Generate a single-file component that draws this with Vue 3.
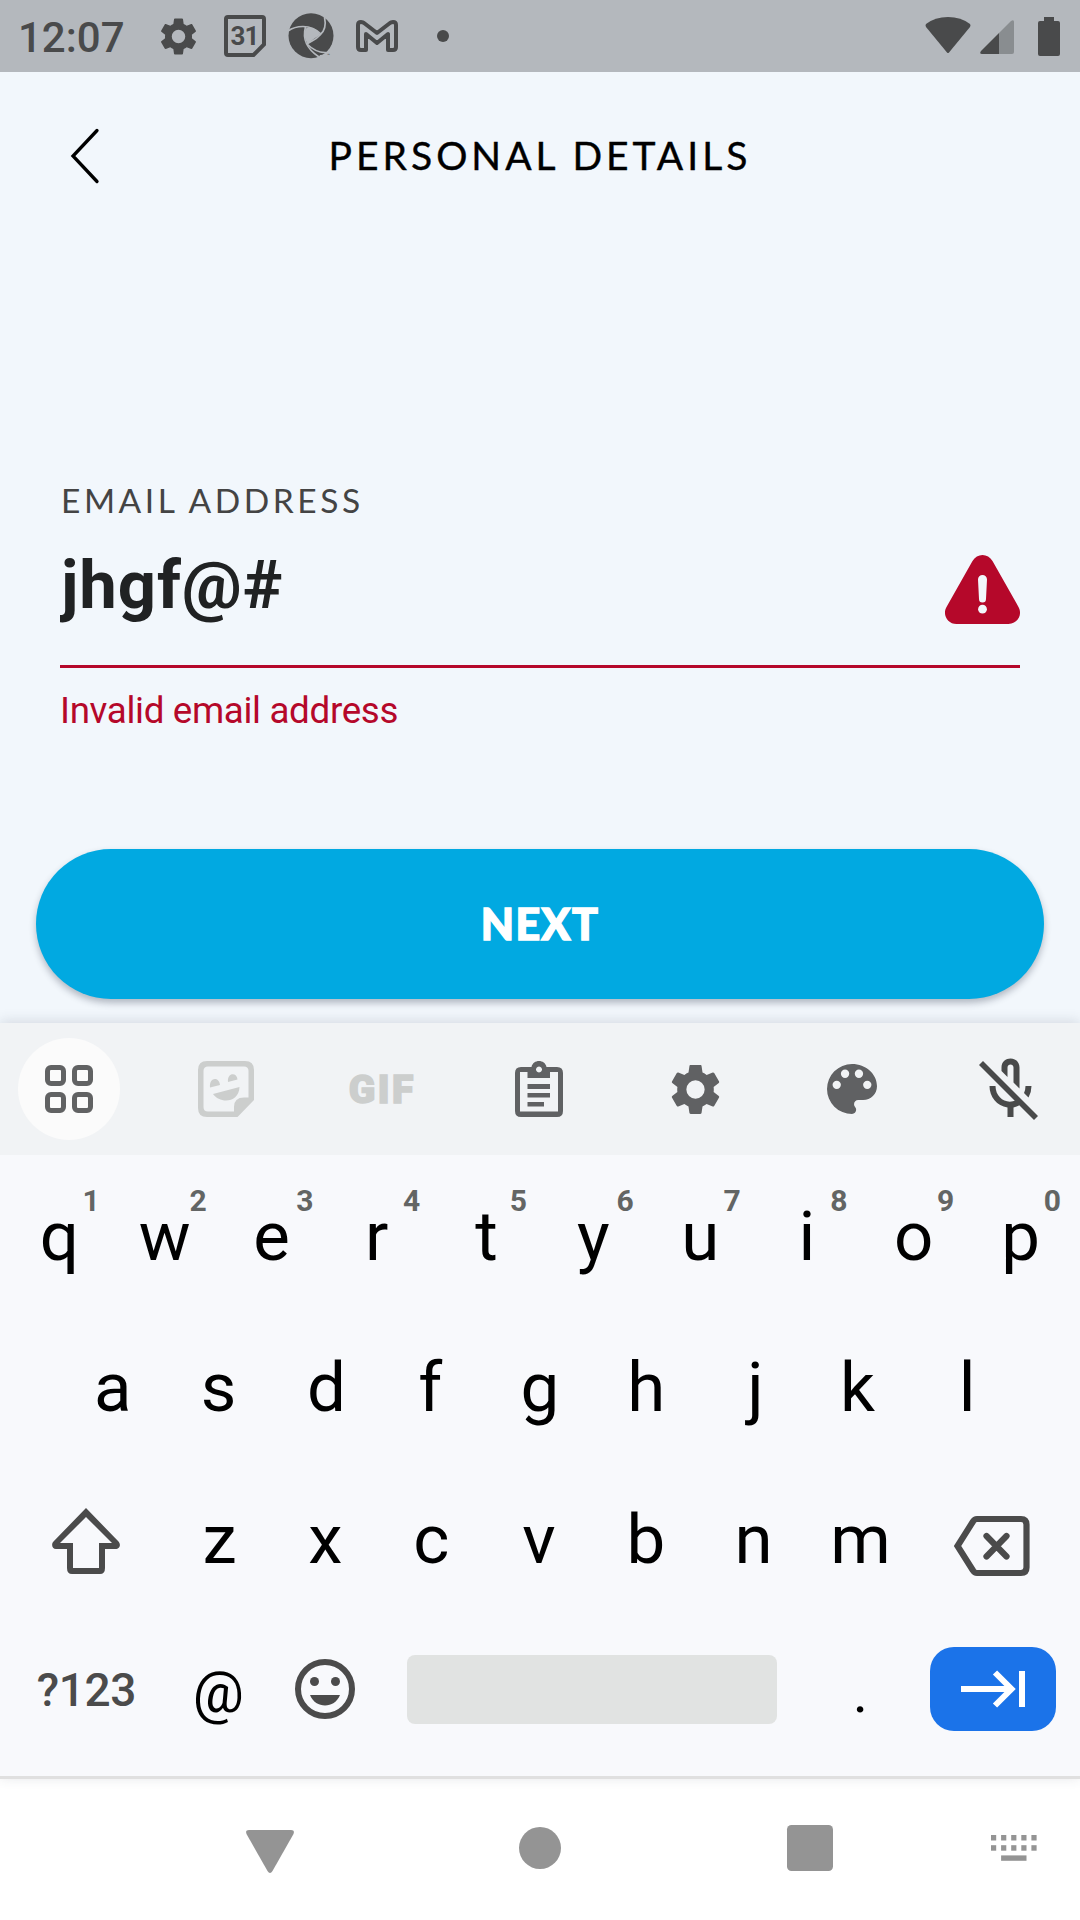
<script setup>
import { ref } from 'vue'

const email = ref('jhgf@#')
const topRow = 'qwertyuiop'.split('').map((key, i) => ({ key, hint: (i + 1) % 10 }))
const homeRow = 'asdfghjkl'.split('')
const bottomRow = 'zxcvbnm'.split('')

// Optical centring of glyphs whose ink is not centred in the advance width
const optical = { w: -1.5, e: -1.5, r: -3, s: -1, f: -3, h: -0.5, j: 2, k: -3, x: -1, c: -2, v: -1, b: -1 }
const nudge = (k) => {
  const v = optical[k] || 0
  return v < 0 ? { paddingRight: `${-2 * v}px` } : { paddingLeft: `${2 * v}px` }
}

const gear =
  'M19.14 12.94c.04-.3.06-.61.06-.94 0-.32-.02-.64-.07-.94l2.03-1.58c.18-.14.23-.41.12-.61l-1.92-3.32c-.12-.22-.37-.29-.59-.22l-2.39.96c-.5-.38-1.03-.7-1.62-.94l-.36-2.54c-.04-.24-.24-.41-.48-.41h-3.84c-.24 0-.43.17-.47.41l-.36 2.54c-.59.24-1.13.57-1.62.94l-2.39-.96c-.22-.08-.47 0-.59.22L2.74 8.87c-.12.21-.08.47.12.61l2.03 1.58c-.05.3-.09.63-.09.94s.02.64.07.94l-2.03 1.58c-.18.14-.23.41-.12.61l1.92 3.32c.12.22.37.29.59.22l2.39-.96c.5.38 1.03.7 1.62.94l.36 2.54c.05.24.24.41.48.41h3.84c.24 0 .44-.17.47-.41l.36-2.54c.59-.24 1.13-.56 1.62-.94l2.39.96c.22.08.47 0 .59-.22l1.92-3.32c.12-.22.07-.47-.12-.61zM12 15.6A3.6 3.6 0 1 1 12 8.4a3.6 3.6 0 0 1 0 7.2z'
</script>

<template>
  <div class="screen">
    <header class="status">
      <span class="clock">12:07</span>
      <svg class="st-gear" width="45" height="45" viewBox="0 0 24 24"><path :d="gear" /></svg>
      <svg class="st-cal" width="42" height="42" viewBox="0 0 42 42">
        <path d="M4 2H38Q40 2 40 4V29.500L29.500 40H4Q2 40 2 38V4Q2 2 4 2Z" fill="none" stroke="#494a4b" stroke-width="4" />
        <text x="20.500" y="29.500" text-anchor="middle">31</text>
      </svg>
      <svg class="st-swirl" width="46" height="46" viewBox="0 0 46 46">
        <circle cx="23" cy="22.700" r="22.500" />
        <g class="cut" fill="none" stroke-width="1.700">
          <path d="M0 18C7 13 22 10 33 21" />
          <path d="M36.500 4C38 11 38 17 32 22C28 27 23 28 19 31" />
          <path d="M17.500 14C14 27 19 36 31 44" />
          <path d="M19 31C26 38 33 41 42 39" />
        </g>
        <path class="cutfill" d="M17.500 15.500Q26 12 32.500 21.500Q25 26 19.500 31Q15 24 17.500 15.500ZM29.500 46L32 42Q37 42 41 37L46 38V46Z" />
        <text x="39" y="44">™</text>
      </svg>
      <svg class="st-mail" width="42" height="32" viewBox="0 0 42 32">
        <path d="M2 5V27Q2 30 5 30H10V14L21 23L32 14V30H37Q40 30 40 27V5Q40 2 37 2Q35 2 34 3L21 13L8 3Q7 2 5 2Q2 2 2 5Z" fill="none" stroke="#494a4b" stroke-width="4" stroke-linejoin="round" />
      </svg>
      <i class="dot"></i>
      <svg class="st-wifi" width="46" height="37" viewBox="0 0 46 37">
        <path d="M1 7Q10 0 23 0Q36 0 45 7Q46 8 45 10L24 35.500Q23 36.500 22 35.500L1 10Q0 8 1 7Z" />
      </svg>
      <svg class="st-signal" width="34" height="34" viewBox="0 0 34 34">
        <path d="M19 13L31 1Q34 -1 34 2V32Q34 34 32 34H19Z" fill="#898d90" />
        <path d="M19 13V34H2Q-1 34 1 31Z" />
      </svg>
      <svg class="st-battery" width="22" height="39" viewBox="0 0 22 39">
        <path d="M6 0H16V4H20Q22 4 22 6V37Q22 39 20 39H2Q0 39 0 37V6Q0 4 2 4H6Z" />
      </svg>
    </header>

    <main class="page">
      <div class="appbar">
        <svg class="back" width="30" height="58" viewBox="0 0 30 58">
          <path d="M26 3.500L2 29L26 54.500" fill="none" stroke="#000" stroke-width="3.300" stroke-linecap="round" />
        </svg>
        <h1>PERSONAL DETAILS</h1>
      </div>
      <section class="field">
        <label>EMAIL ADDRESS</label>
        <div class="entry">
          <span>{{ email }}</span>
          <svg width="75" height="69" viewBox="0 0 75 69">
            <path d="M27.500 6C32-2 43-2 47.500 6L73.500 52C78 60 72 69 63.500 69H11.500C3 69-3 60 1.500 52Z" fill="#b5082a" />
            <path d="M33 24.500a4.500 4.500 0 0 1 9 0L41 44a3.500 3.500 0 0 1-7 0Z" fill="#f2f7fc" />
            <circle cx="37.500" cy="54.200" r="4.400" fill="#f2f7fc" />
          </svg>
        </div>
        <p>Invalid email address</p>
      </section>
      <button class="next">NEXT</button>
    </main>

    <section class="keyboard">
      <div class="tools">
        <div class="tool">
          <span class="bubble">
            <svg width="48" height="48" viewBox="0 0 48 48" fill="none" stroke="#616263" stroke-width="5">
              <rect x="2.500" y="2.500" width="16" height="16" rx="3.500" />
              <rect x="29.500" y="2.500" width="16" height="16" rx="3.500" />
              <rect x="2.500" y="29.500" width="16" height="16" rx="3.500" />
              <rect x="29.500" y="29.500" width="16" height="16" rx="3.500" />
            </svg>
          </span>
        </div>
        <div class="tool">
          <svg width="56" height="56" viewBox="0 0 56 56" fill="#cccecd">
            <path fill-rule="evenodd" d="M9 0H47Q56 0 56 9V39L39.500 56H9Q0 56 0 47V9Q0 0 9 0ZM10 5.500Q5.500 5.500 5.500 10V46Q5.500 50.500 10 50.500H36V46Q36 36.500 46 36.500H50.500V10Q50.500 5.500 46 5.500Z" />
            <path d="M12 26.500C11 16 21 15.500 22 24ZM30 21C29 11 39 11 39.500 18.500ZM15 33L41.500 26C41 42 22 43 15 33Z" />
          </svg>
        </div>
        <div class="tool gif">GIF</div>
        <div class="tool">
          <svg width="48" height="56" viewBox="0 0 48 56" fill="#606163">
            <path fill-rule="evenodd" d="M6 6H16.500C18-2 30-2 31.500 6H42Q48 6 48 12V50Q48 56 42 56H6Q0 56 0 50V12Q0 6 6 6ZM5 11V50.500H43V11H35V17H12.500V11ZM24 5.500a3 3 0 1 0 .01 0Z" />
            <path d="M12.500 23H35V28H12.500ZM12.500 32H35V36.500H12.500ZM12.500 41H29V45.500H12.500Z" />
          </svg>
        </div>
        <div class="tool">
          <svg width="61" height="61" viewBox="0 0 24 24" fill="#606163"><path :d="gear" /></svg>
        </div>
        <div class="tool">
          <svg width="50" height="50" viewBox="3 3 18 18" fill="#606163">
            <path d="M12 3a9 9 0 0 0 0 18c.83 0 1.500-.67 1.500-1.500 0-.39-.15-.74-.39-1.010-.23-.26-.38-.61-.38-.99 0-.83.67-1.500 1.500-1.500H16c2.760 0 5-2.240 5-5 0-4.420-4.030-8-9-8zm-5.500 9a1.500 1.500 0 1 1 0-3 1.500 1.500 0 0 1 0 3zm3-4a1.500 1.500 0 1 1 0-3 1.500 1.500 0 0 1 0 3zm5 0a1.500 1.500 0 1 1 0-3 1.500 1.500 0 0 1 0 3zm3 4a1.500 1.500 0 1 1 0-3 1.500 1.500 0 0 1 0 3z" />
          </svg>
        </div>
        <div class="tool">
          <svg width="60" height="62" viewBox="0 0 60 62" fill="#494a4a">
            <path d="M22.500 13V9.500C22.500-2.500 40.500-2.500 40.500 9.500V30.500L34.500 24.500V9.500C34.500 5.500 28.500 5.500 28.500 9.500V19L22.500 13Z" />
            <path d="M52.500 28Q52.500 34 49.500 39.500L45 35Q46.500 31.500 46.500 28Z" />
            <path d="M10.500 28H16.500C16.500 40 28 47 37 42L41.500 46.500Q38.500 48.800 34.500 49.500V59H28.500V49.500C18 48 10.500 39 10.500 28Z" />
            <path d="M2 5L57 60" fill="none" stroke="#494a4a" stroke-width="5.600" />
          </svg>
        </div>
      </div>

      <div class="keys">
        <div class="row">
          <span v-for="k in topRow" :key="k.key" class="key" :style="nudge(k.key)">{{ k.key }}<sup>{{ k.hint }}</sup></span>
        </div>
        <div class="row">
          <span v-for="k in homeRow" :key="k" class="key" :style="nudge(k)">{{ k }}</span>
        </div>
        <div class="row">
          <span class="key wide shift">
            <svg width="68" height="66" viewBox="0 0 68 66" fill="#4b4b4b">
              <path d="M34 0L66.500 33.500C70 38 66 41 64 41H53V60Q53 66 48 66H20Q15 66 15 60V41H4C0 41-1 36 1.500 33.500ZM34 9L8 35H21V60H47V35H60Z" fill-rule="evenodd" />
            </svg>
          </span>
          <span v-for="k in bottomRow" :key="k" class="key low" :style="nudge(k)">{{ k }}</span>
          <span class="key wide back-key">
            <svg width="76" height="60" viewBox="0 0 76 60" fill="none" stroke="#4b4b4b" stroke-width="6.200">
              <path d="M23 3H67Q72.500 3 72.500 8.500V51.500Q72.500 57 67 57H23Q20.500 57 19 54.500L3.500 30L19 5.500Q20.500 3 23 3Z" />
              <path d="M32.500 20L52.500 40.500M52.500 20L32.500 40.500" stroke-linecap="round" />
            </svg>
          </span>
        </div>
        <div class="row">
          <span class="key wide symbols">?123</span>
          <span class="key small at">@</span>
          <span class="key emoji">
            <svg width="60" height="60" viewBox="0 0 60 60" fill="#4b4b4b">
              <circle cx="30" cy="30" r="27" fill="none" stroke="#4b4b4b" stroke-width="6" />
              <circle cx="19.500" cy="22.500" r="4.500" /><circle cx="40.500" cy="22.500" r="4.500" />
              <path d="M15 36H45C39.500 50 20.500 50 15 36Z" />
            </svg>
          </span>
          <span class="spacebar"></span>
          <span class="key small">.</span>
          <span class="enter">
            <svg width="66" height="38" viewBox="0 0 66 38" fill="none" stroke="#fff" stroke-width="6">
              <path d="M1 19H50M35 2.500L51.500 19L35 35.500M62 1V37" />
            </svg>
          </span>
        </div>
      </div>
    </section>

    <nav class="navbar">
      <svg width="48" height="43" viewBox="0 0 48 43"><path d="M3 0H45Q49 0 47.500 4L26.500 41Q24 45 21.500 41L.5 4Q-1 0 3 0Z" /></svg>
      <svg width="42" height="42" viewBox="0 0 42 42"><circle cx="21" cy="21" r="21" /></svg>
      <svg width="46" height="46" viewBox="0 0 46 46"><rect width="46" height="46" rx="4.500" /></svg>
      <svg width="46" height="26" viewBox="0 0 46 26">
        <template v-for="n in 5" :key="n">
          <rect :x="(n - 1) * 10.1" y="0" width="5.200" height="5.500" />
          <rect :x="(n - 1) * 10.1" y="10.200" width="5.200" height="5.500" />
        </template>
        <rect x="10.100" y="20.400" width="25.400" height="5.400" />
      </svg>
    </nav>
  </div>
</template>

<style>
body { margin: 0; }
</style>

<style scoped>
.screen {
  width: 1080px;
  height: 1920px;
  display: flex;
  flex-direction: column;
  overflow: hidden;
  background: #f2f7fc;
  font-family: Roboto, "Liberation Sans", sans-serif;
}
svg { display: block; flex: none; overflow: visible; }

.status {
  height: 72px;
  flex: none;
  display: flex;
  align-items: center;
  padding: 0 20px 0 18px;
  background: #b4b8bd;
  fill: #494a4b;
  color: #494a4b;
}
.clock { font-size: 42px; font-weight: 500; line-height: 72px; width: 138px; padding-top: 3px; box-sizing: border-box; }
.st-cal { margin-left: 23px; }
.st-cal text { font: 700 26px Roboto, sans-serif; letter-spacing: -1px; }
.st-swirl { margin-left: 22px; }
.st-swirl .cut { stroke: #b4b8bd; }
.st-swirl .cutfill { fill: #b4b8bd; }
.st-swirl text { font: 5px Roboto, sans-serif; }
.st-mail { margin: 0 0 1px 22px; }
.dot { width: 12px; height: 12px; border-radius: 50%; background: #494a4b; margin-left: 39px; }
.st-wifi { margin: 0 9px 2px auto; }
.st-signal { margin-top: 2px; }
.st-battery { margin-left: 24px; }

.page { height: 951px; flex: none; display: flex; flex-direction: column; }
.appbar { height: 168px; display: flex; align-items: center; justify-content: center; position: relative; }
.back { position: absolute; left: 70.500px; top: 55px; }
h1 {
  margin: 0 0 2px;
  font: 400 39px/48px Lato, sans-serif;
  letter-spacing: 4px;
  color: #000;
  -webkit-text-stroke: .4px #000;
}
.field { margin: 235px 60px 0; }
label {
  display: block;
  padding-left: 1px;
  font: 400 33.500px/50px Lato, sans-serif;
  letter-spacing: 3.550px;
  color: #444;
}
.entry {
  height: 140px;
  display: flex;
  justify-content: space-between;
  border-bottom: 3.500px solid #b5082a;
}
.entry span {
  font-size: 67px;
  font-weight: 700;
  line-height: 80px;
  letter-spacing: .9px;
  color: #202223;
  margin-top: 20px;
  text-indent: 1px;
  overflow: hidden;
}
.entry svg { margin-top: 30px; }
p { margin: 21px 0 0; font-size: 36.750px; line-height: 44px; letter-spacing: -.34px; color: #b5082a; }
.next {
  margin: 116px 36px 0;
  height: 150px;
  flex: none;
  border: 0;
  border-radius: 75px;
  background: #01a9e1;
  color: #fff;
  font: 900 43px/150px Lato, sans-serif;
  letter-spacing: 1.300px;
  -webkit-text-stroke: 1.400px #fff;
  padding: 0;
  box-shadow: 0 4px 7px rgba(40, 50, 70, .32);
}

.keyboard {
  height: 753px;
  flex: none;
  position: relative;
  background: #f8f9fc;
  border-bottom: 3px solid #e0e0e0;
  box-shadow: 0 -2px 12px rgba(60, 70, 90, .16);
}
.tools { height: 132px; display: flex; background: #f1f3f5; overflow: hidden; }
.tool { width: 156.700px; flex: none; display: flex; align-items: center; justify-content: center; }
.tool:first-child { margin-left: -9.400px; }
.bubble { width: 102px; height: 102px; border-radius: 50%; background: #fbfbfb; display: grid; place-items: center; }
.gif { font-size: 39px; font-weight: 900; color: #cccecd; letter-spacing: 2.500px; -webkit-text-stroke: 1.500px #cccecd; padding-top: 2px; box-sizing: border-box; }

.keys { padding: 6px 6px 0; }
.row { height: 151px; display: flex; align-items: center; justify-content: center; }
.key {
  width: 106.800px;
  height: 151px;
  box-sizing: border-box;
  flex: none;
  position: relative;
  display: flex;
  align-items: center;
  justify-content: center;
  font-size: 69px;
  line-height: 151px;
  color: #000;
}
.key sup { position: absolute; right: 13px; top: 22px; font-size: 30px; line-height: 36px; font-weight: 700; color: #636564; }
.wide { width: 160.200px; }
.low { padding-top: 1px; }
.shift svg { margin: 4px 0 0; }
.back-key svg { margin: 14px 3px 0 0; }
.symbols { font-size: 46px; font-weight: 500; letter-spacing: -.4px; color: #4b4b4b; padding-top: 2px; }
.small { font-size: 58px; padding-top: 6px; }
.at { font-size: 57px; padding-right: 3px; }
.emoji { padding: 0 3px 2px 0; }
.spacebar { width: 370px; height: 69px; margin: 0 29.400px 0 27.400px; border-radius: 8px; background: #e1e3e2; }
.enter { width: 126px; height: 84px; margin: 0 18px 2px 16px; border-radius: 24px; background: #1b73e9; display: grid; place-items: center; }

.navbar {
  height: 141px;
  flex: none;
  display: flex;
  align-items: center;
  background: #fff;
  fill: #949494;
  padding: 0 0 3px 246px;
  box-sizing: border-box;
}
.navbar svg:first-child { margin: 6px 225px 0 0; }
.navbar svg:nth-child(3) { margin: 0 157.500px 0 226px; }
</style>
